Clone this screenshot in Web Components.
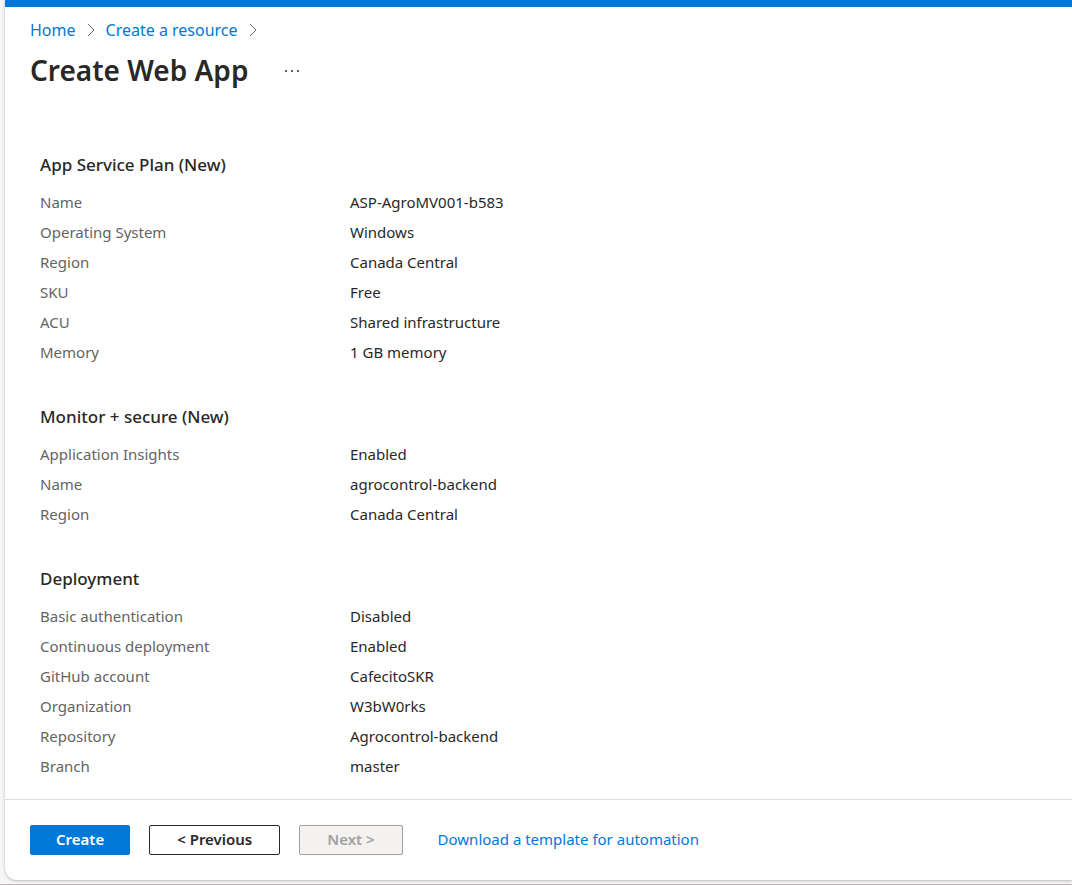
<!DOCTYPE html>
<html lang="en">
<head>
<meta charset="utf-8">
<meta name="viewport" content="width=device-width, initial-scale=1">
<title>Create Web App</title>
<style>
  html { --accent: #0078d7; --ink: #292827; --muted: #646464; --line: #dddddd; }
  body { margin: 0; color: var(--ink); background: #f6f6f6; font: 15px/30px "Noto Sans", "Open Sans", sans-serif; }
</style>
</head>
<body>
<portal-blade>
  <blade-header slot="header" heading="Create Web App">
    <crumb-link href="#home">Home</crumb-link>
    <crumb-link href="#create">Create a resource</crumb-link>
  </blade-header>

  <review-section heading="App Service Plan (New)">
    <review-item label="Name">ASP-AgroMV001-b583</review-item>
    <review-item label="Operating System">Windows</review-item>
    <review-item label="Region">Canada Central</review-item>
    <review-item label="SKU">Free</review-item>
    <review-item label="ACU">Shared infrastructure</review-item>
    <review-item label="Memory">1 GB memory</review-item>
  </review-section>
  <review-section heading="Monitor + secure (New)">
    <review-item label="Application Insights">Enabled</review-item>
    <review-item label="Name">agrocontrol-backend</review-item>
    <review-item label="Region">Canada Central</review-item>
  </review-section>
  <review-section heading="Deployment">
    <review-item label="Basic authentication">Disabled</review-item>
    <review-item label="Continuous deployment">Enabled</review-item>
    <review-item label="GitHub account">CafecitoSKR</review-item>
    <review-item label="Organization">W3bW0rks</review-item>
    <review-item label="Repository">Agrocontrol-backend</review-item>
    <review-item label="Branch">master</review-item>
  </review-section>

  <wizard-footer slot="footer">
    <action-button kind="primary">Create</action-button>
    <action-button>&lt; Previous</action-button>
    <action-button disabled>Next &gt;</action-button>
    <text-link slot="link" href="#template">Download a template for automation</text-link>
  </wizard-footer>
</portal-blade>

<script>
  const define = (name, render, setup) => customElements.define(name, class extends HTMLElement {
    constructor() {
      super();
      this.attachShadow({ mode: 'open' });
    }
    connectedCallback() {
      if (this.shadowRoot.childNodes.length) return;
      this.shadowRoot.innerHTML = render;
      if (setup) setup(this, this.shadowRoot);
    }
  });

  define('portal-blade', `
    <style>
      :host { display: flex; flex-direction: column; box-sizing: border-box; min-height: 100vh;
              padding: 0 0 4px 5px; border-bottom: 1px solid #c2b2bf; overflow: hidden; }
      .panel { flex: 1; display: flex; flex-direction: column; background: #fff;
               border-top: 7px solid var(--accent); border-bottom-left-radius: 12px;
               box-shadow: 0 1px 3px rgba(0, 0, 0, .25); }
      main { flex: 1; display: flex; flex-direction: column; gap: 38px; padding: 58px 40px 18px 35px; }
    </style>
    <div class="panel">
      <slot name="header"></slot>
      <main><slot></slot></main>
      <slot name="footer"></slot>
    </div>`);

  define('blade-header', `
    <style>
      :host { display: block; padding: 8px 25px 0; }
      nav { display: flex; align-items: center; font-size: 16px; }
      .title { display: flex; align-items: center; gap: 32px; height: 50px; }
      h1 { margin: 0; font-size: 28px; line-height: 40px; font-weight: 600; }
      button { display: flex; padding: 6px 4px 4px; border: 0; background: none; color: inherit; }
      svg { display: block; }
    </style>
    <nav aria-label="Breadcrumb"><slot></slot></nav>
    <div class="title">
      <h1></h1>
      <button type="button" aria-label="More options">
        <svg width="16" height="4" viewBox="0 0 16 4" fill="currentColor">
          <circle cx="2" cy="2" r="1"/><circle cx="8" cy="2" r="1"/><circle cx="14" cy="2" r="1"/>
        </svg>
      </button>
    </div>`, (el, root) => { root.querySelector('h1').textContent = el.getAttribute('heading'); });

  define('crumb-link', `
    <style>
      :host { display: flex; align-items: center; }
      a { color: var(--accent); text-decoration: none; }
      svg { margin: 0 11px; }
    </style>
    <a><slot></slot></a>
    <svg width="8" height="14" viewBox="0 0 8 14" fill="none" stroke="#6b6b6b" aria-hidden="true"><path d="M1 1l6 6-6 6"/></svg>`,
    (el, root) => { root.querySelector('a').href = el.getAttribute('href'); });

  define('review-section', `
    <style>
      :host { display: block; }
      h2 { margin: 0 0 10px; font-size: 17px; line-height: 24px; font-weight: 500; }
    </style>
    <section><h2></h2><slot></slot></section>`,
    (el, root) => { root.querySelector('h2').textContent = el.getAttribute('heading'); });

  define('review-item', `
    <style>
      :host { display: block; }
      dl { display: grid; grid-template-columns: 310px 1fr; margin: 0; }
      dt { color: var(--muted); }
      dd { margin: 0; }
    </style>
    <dl><dt></dt><dd><slot></slot></dd></dl>`,
    (el, root) => { root.querySelector('dt').textContent = el.getAttribute('label'); });

  define('wizard-footer', `
    <style>
      :host { display: flex; flex-wrap: wrap; align-items: flex-start; gap: 16px 35px;
              padding: 25px; border-top: 1px solid var(--line); line-height: 28px; }
      .actions { display: flex; gap: 19px; }
    </style>
    <div class="actions"><slot></slot></div>
    <slot name="link"></slot>`);

  define('action-button', `
    <style>
      :host { display: block; }
      button { display: block; box-sizing: border-box; height: 30px; padding: 0 27px 2px; border: 1px solid var(--ink);
               border-radius: 2px; background: #fff; color: var(--ink);
               font: inherit; font-weight: 600; line-height: 26px; white-space: nowrap; }
      :host([kind=primary]) button { padding: 0 25px 2px; border-color: var(--accent); background: var(--accent); color: #fff; }
      button:disabled { border-color: #a19f9d; background: #f3f2f1; color: #a19f9d; }
    </style>
    <button type="button"><slot></slot></button>`,
    (el, root) => { root.querySelector('button').disabled = el.hasAttribute('disabled'); });

  define('text-link', `
    <style>
      :host { display: block; }
      a { color: var(--accent); text-decoration: none; }
    </style>
    <a><slot></slot></a>`,
    (el, root) => { root.querySelector('a').href = el.getAttribute('href'); });
</script>
</body>
</html>
